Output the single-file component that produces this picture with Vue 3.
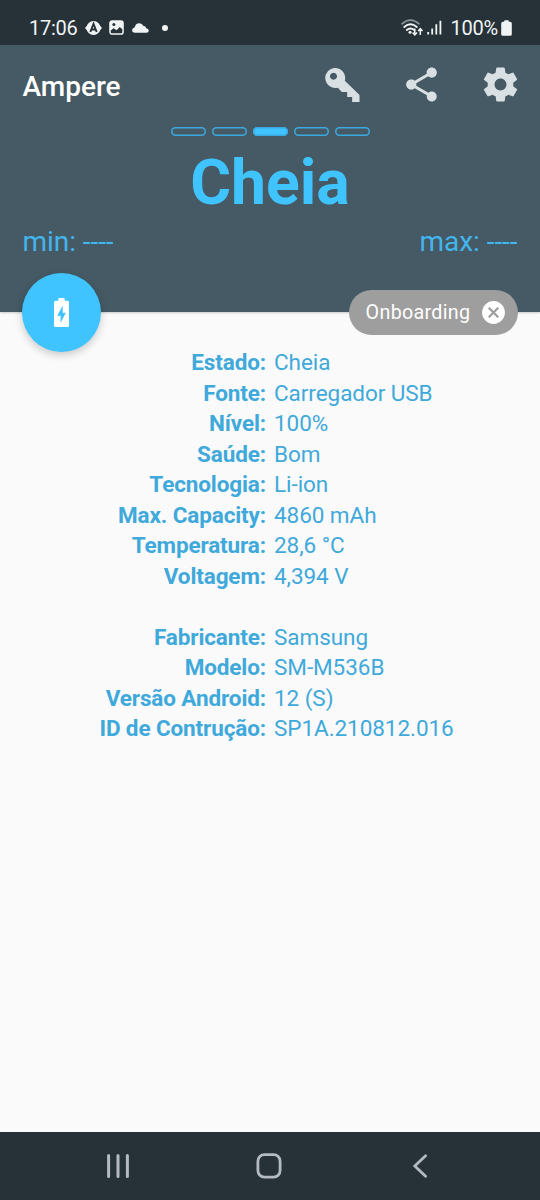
<script setup>
const battery = [
  ['Estado:', 'Cheia'],
  ['Fonte:', 'Carregador USB'],
  ['Nível:', '100%'],
  ['Saúde:', 'Bom'],
  ['Tecnologia:', 'Li-ion'],
  ['Max. Capacity:', '4860 mAh'],
  ['Temperatura:', '28,6 °C'],
  ['Voltagem:', '4,394 V'],
]
const device = [
  ['Fabricante:', 'Samsung'],
  ['Modelo:', 'SM-M536B'],
  ['Versão Android:', '12 (S)'],
  ['ID de Contrução:', 'SP1A.210812.016'],
]
const groups = [battery, device]
</script>

<template>
  <div class="screen">
    <div class="status">
      <span class="clock">17:06</span>
      <svg class="s-app" width="17" height="16" viewBox="0 0 17 16">
        <circle cx="8.5" cy="8" r="6.9" fill="#f1f4f5" />
        <path d="M3 4.5 0 8l3 3.500zM14 4.500 17 8l-3 3.500z" fill="#f1f4f5" />
        <path d="M5.300 12 8.500 3.800 11.700 12M6.500 9.500h4" fill="none" stroke="#263238" stroke-width="1.900" />
      </svg>
      <svg class="s-img" width="15" height="15" viewBox="0 0 15 15">
        <rect x="1.100" y="1.100" width="12.800" height="12.800" rx="2" fill="#f1f4f5" stroke="#f1f4f5" stroke-width="1.800" />
        <path d="M1.700 10.400 4.600 8.300 7.600 10.300 10.800 7 13.300 9.300V12.300Q13.300 13.300 12.300 13.300H2.700Q1.700 13.300 1.700 12.300Z" fill="#263238" />
        <circle cx="4.900" cy="4.600" r="1.500" fill="#263238" />
      </svg>
      <svg class="s-cloud" width="17" height="10" viewBox="0 0 17 10">
        <path d="M3 9.800Q0 9.600.1 7 .4 4.800 2.600 4.500 3.500.3 7.300.2 10.200.2 11.500 3 13.700 2.900 14.200 5.200 16.700 5.600 16.800 7.700 16.700 9.700 14.400 9.800Z" fill="#f1f4f5" />
      </svg>
      <i class="s-dot"></i>
      <span class="grow"></span>
      <svg class="s-wifi" width="23" height="18" viewBox="0 0 23 18">
        <g fill="none" stroke-linecap="round">
          <path d="M1 4.800Q9.500-2.500 18 4.800" stroke="#89949a" stroke-width="1.700" />
          <path d="M3.200 8Q9.500 2.600 15.800 8" stroke="#f1f4f5" stroke-width="1.900" />
          <path d="M5.800 11Q9.500 7.800 13.200 11" stroke="#f1f4f5" stroke-width="1.900" />
        </g>
        <circle cx="9" cy="13.300" r="1.500" fill="#f1f4f5" />
        <path d="M13.800 9.500v6M11.600 13.600l2.200 2.300 2.200-2.300M19.300 16v-6M17.100 12l2.200-2.300 2.200 2.300" fill="none" stroke="#f1f4f5" stroke-width="1.500" />
      </svg>
      <svg class="s-signal" width="15" height="15" viewBox="0 0 15 15">
        <path d="M1.200 12v2.500M5.200 8.500v6M9.300 4.300v10.200M13.400 .8v13.700" stroke="#f1f4f5" stroke-width="1.800" />
      </svg>
      <span class="pct">100%</span>
      <svg class="s-bat" width="11" height="16" viewBox="0 0 11 16">
        <path d="M3.200 1.800V.9Q3.200.2 3.900.2H7.100Q7.800.2 7.800.9V1.800H9.200Q10.800 1.800 10.800 3.400V14.200Q10.800 15.800 9.200 15.800H1.800Q.2 15.800.2 14.200V3.400Q.2 1.800 1.800 1.800Z" fill="#f1f4f5" />
      </svg>
    </div>

    <header class="head">
      <div class="toolbar">
        <h1>Ampere</h1>
        <span class="grow"></span>
        <svg class="key" width="35" height="34" viewBox="77 51 104 102">
          <path fill-rule="evenodd" d="M107 51a30 30 0 0 1 29 38L180 132V153H158V138H143V123H127L115 110A30 30 0 1 1 107 51ZM102 65.500a10.500 10.500 0 1 0 .01 0Z" fill="#d9e0e4" />
        </svg>
        <svg class="share" width="41" height="41" viewBox="0 0 24 24">
          <path d="M18 16.080c-.76 0-1.440.3-1.960.77L8.910 12.700c.05-.23.090-.46.090-.7s-.040-.47-.090-.7l7.050-4.110c.54.5 1.250.81 2.040.81 1.660 0 3-1.340 3-3s-1.340-3-3-3-3 1.340-3 3c0 .24.040.47.090.7L8.040 9.810C7.500 9.310 6.790 9 6 9c-1.660 0-3 1.340-3 3s1.340 3 3 3c.79 0 1.500-.31 2.040-.81l7.120 4.160c-.05.21-.080.43-.080.65 0 1.610 1.310 2.920 2.920 2.920s2.920-1.310 2.920-2.920-1.310-2.920-2.920-2.920z" fill="#d9e0e4" />
        </svg>
        <svg class="gear" width="41" height="41" viewBox="0 0 24 24">
          <path d="M19.430 12.980c.04-.32.070-.64.070-.98s-.030-.66-.070-.98l2.110-1.650c.19-.15.240-.42.120-.64l-2-3.460c-.12-.22-.39-.3-.61-.22l-2.490 1c-.52-.4-1.080-.73-1.690-.98l-.38-2.650C14.460 2.180 14.250 2 14 2h-4c-.25 0-.46.180-.49.420l-.38 2.650c-.61.25-1.170.59-1.690.98l-2.490-1c-.23-.09-.49 0-.61.220l-2 3.460c-.13.220-.07.490.12.640l2.110 1.650c-.04.320-.07.650-.07.980s.030.660.070.980l-2.110 1.650c-.19.150-.24.420-.12.640l2 3.460c.12.220.39.300.61.220l2.490-1c.52.400 1.080.730 1.690.980l.38 2.650c.03.240.24.420.49.420h4c.25 0 .46-.18.490-.42l.38-2.650c.61-.25 1.170-.59 1.690-.98l2.490 1c.23.090.49 0 .61-.22l2-3.460c.12-.22.070-.49-.12-.64l-2.110-1.650zM12 15.500c-1.930 0-3.500-1.570-3.500-3.500s1.570-3.500 3.500-3.500 3.500 1.570 3.500 3.500-1.570 3.500-3.500 3.500z" fill="#d9e0e4" />
        </svg>
      </div>
      <div class="pips">
        <i v-for="n in 5" :key="n" :class="{ on: n === 3 }"></i>
      </div>
      <div class="state">Cheia</div>
      <div class="range"><span>min: ----</span><span>max: ----</span></div>
    </header>

    <div class="floating">
      <div class="fab">
        <svg width="15" height="29" viewBox="0 0 15 29">
          <path fill-rule="evenodd" d="M4.300 2.800V1Q4.300 0 5.200 0H9.800Q10.700 0 10.700 1V2.800H13.500Q15 2.800 15 4.300V27.500Q15 29 13.500 29H1.500Q0 29 0 27.500V4.300Q0 2.800 1.500 2.800ZM8.700 7.500 3.200 17.800H6.600V25L11.800 14.700H8.700Z" fill="#fff" />
        </svg>
      </div>
      <div class="chip">
        <span>Onboarding</span>
        <svg width="23" height="23" viewBox="0 0 23 23">
          <circle cx="11.500" cy="11.500" r="11.400" fill="#fff" />
          <path d="m6.800 6.800 9.400 9.400M16.200 6.800l-9.400 9.400" stroke="#9e9e9e" stroke-width="2.300" />
        </svg>
      </div>
    </div>

    <main class="info">
      <dl v-for="(g, i) in groups" :key="i">
        <template v-for="row in g" :key="row[0]">
          <dt>{{ row[0] }}</dt>
          <dd>{{ row[1] }}</dd>
        </template>
      </dl>
    </main>

    <nav class="nav">
      <svg width="24" height="26" viewBox="0 0 24 26">
        <path d="M2.600 2.600v20.800M12 2.600v20.800M21.400 2.600v20.800" stroke="#b3bbc0" stroke-width="3" stroke-linecap="round" />
      </svg>
      <svg class="home" width="26" height="26" viewBox="0 0 26 26">
        <rect x="1.900" y="1.700" width="22.200" height="22.400" rx="6.500" fill="none" stroke="#b3bbc0" stroke-width="2.800" />
      </svg>
      <svg width="16" height="26" viewBox="0 0 16 26">
        <path d="M13.600 2.800 2.800 13 13.600 23.200" fill="none" stroke="#b3bbc0" stroke-width="2.800" stroke-linecap="round" />
      </svg>
    </nav>
  </div>
</template>

<style>
body { margin: 0; background: #fafafa; }
</style>

<style scoped>
* { box-sizing: border-box; }
svg { display: block; flex: none; }
.screen {
  width: 540px;
  height: 1200px;
  display: flex;
  flex-direction: column;
  background: #fafafa;
  font-family: Roboto, sans-serif;
  overflow: hidden;
}
.grow { flex: 1; }
.status {
  height: 45px;
  flex: none;
  display: flex;
  align-items: center;
  padding: 10px 28px 0 29px;
  background: #263238;
  color: #f1f4f5;
  font-size: 20px;
}
.clock { width: 56px; letter-spacing: -.25px; }
.s-img { margin-left: 7px; }
.s-cloud { margin-left: 8px; }
.s-dot { width: 6px; height: 6px; border-radius: 50%; background: #f1f4f5; margin-left: 13px; }
.s-signal { margin: 0 8px 0 3px; }
.pct { letter-spacing: -.2px; }
.s-bat { margin-left: 3px; }
.head {
  height: 267px;
  flex: none;
  background: #455a64;
  color: #40c4ff;
  box-shadow: 0 1px 2px rgba(0, 0, 0, .2);
}
.toolbar {
  height: 79px;
  display: flex;
  align-items: center;
  padding: 0 19px 0 22.500px;
}
h1 { margin: 3px 0 0; font-size: 28px; font-weight: 500; color: #fff; line-height: 33px; }
.share { margin-left: 41px; }
.gear { margin-left: 38px; }
.pips { display: flex; justify-content: center; gap: 6px; padding-top: 3px; }
.pips i { width: 35px; height: 9px; box-shadow: inset 0 0 0 1.500px #3ba9df; border-radius: 5px; }
.pips .on { background: #40c4ff; }
.state { font-size: 62.500px; line-height: 74px; font-weight: 700; text-align: center; margin-top: 10px; }
.range {
  display: flex;
  justify-content: space-between;
  padding: 5px 22.500px 0;
  font-size: 28px;
  line-height: 33px;
  letter-spacing: -.05px;
  color: #43b5ec;
}
.floating {
  height: 79px;
  flex: none;
  margin-top: -39px;
  padding: 0 22.400px;
  display: flex;
  align-items: center;
  justify-content: space-between;
  position: relative;
}
.fab {
  width: 79px;
  height: 79px;
  border-radius: 50%;
  background: #40c4ff;
  display: flex;
  align-items: center;
  justify-content: center;
  box-shadow: 0 3px 8px rgba(0, 0, 0, .2);
}
.chip {
  width: 169px;
  height: 45px;
  border-radius: 23px;
  background: #9e9e9e;
  color: #fff;
  font-size: 19.700px;
  letter-spacing: .3px;
  display: flex;
  align-items: center;
  justify-content: space-between;
  padding: 0 13px 0 17px;
}
.info { flex: 1; margin-top: -4.600px; font-size: 22.500px; letter-spacing: -.06px; color: #3fa9db; }
dl {
  margin: 0 0 30.500px;
  display: grid;
  grid-template-columns: 266px 1fr;
  column-gap: 8px;
  grid-auto-rows: 30.500px;
  line-height: 30.500px;
  white-space: nowrap;
}
dt { text-align: right; font-weight: 700; letter-spacing: -.12px; }
dd { margin: 0; }
.nav {
  height: 68px;
  flex: none;
  background: #263238;
  display: flex;
  align-items: center;
  justify-content: space-between;
  padding: 0 112px 0 106px;
}
.home { margin-right: 4px; }
</style>
